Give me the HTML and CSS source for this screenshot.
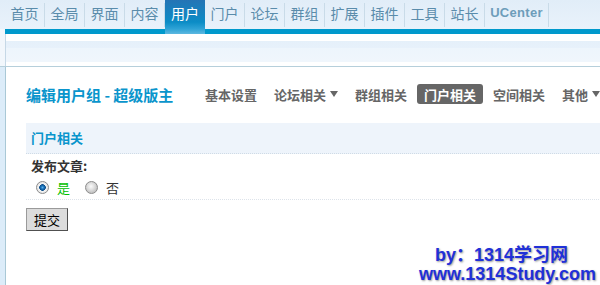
FILE: index.html
```html
<!DOCTYPE html>
<html lang="zh-CN">
<head>
<meta charset="utf-8">
<title>编辑用户组</title>
<link rel="stylesheet" href="styles.css">
</head>
<body>
<div class="topnav">
  <a class="tab">首页</a><span class="sep"></span>
  <a class="tab">全局</a><span class="sep"></span>
  <a class="tab">界面</a><span class="sep"></span>
  <a class="tab">内容</a><span class="sep"></span>
  <a class="tab active">用户</a>
  <a class="tab">门户</a><span class="sep"></span>
  <a class="tab">论坛</a><span class="sep"></span>
  <a class="tab">群组</a><span class="sep"></span>
  <a class="tab">扩展</a><span class="sep"></span>
  <a class="tab">插件</a><span class="sep"></span>
  <a class="tab">工具</a><span class="sep"></span>
  <a class="tab">站长</a><span class="sep"></span>
  <a class="tab uc">UCenter</a><span class="sep"></span>
</div>
<div class="frame-top">
  <div class="rail-top"></div>
  <div class="col-top">
    <div class="bar"></div>
    <div class="subhead"><div class="band"></div></div>
  </div>
</div>
<div class="frame-main">
  <div class="rail-main"></div>
  <div class="content">
    <div class="titlerow">
      <h3 class="title">编辑用户组 - 超级版主</h3>
      <ul class="subnav">
        <li class="item">基本设置</li>
        <li class="item">论坛相关<span class="caret"></span></li>
        <li class="item">群组相关</li>
        <li class="item current">门户相关</li>
        <li class="item">空间相关</li>
        <li class="item">其他<span class="caret"></span></li>
      </ul>
    </div>
    <div class="sec-head">门户相关</div>
    <div class="field-label">发布文章:</div>
    <div class="radios">
      <label class="opt"><input class="radio" type="radio" name="post" checked><span class="yes">是</span></label>
      <label class="opt"><input class="radio" type="radio" name="post"><span class="no">否</span></label>
    </div>
    <button class="submit" type="button">提交</button>
  </div>
</div>
<div class="wm wm1">by：1314学习网</div>
<div class="wm wm2">www.1314Study.com</div>
</body>
</html>
```
FILE: styles.css
```css
* { box-sizing: border-box; }
html, body { margin: 0; padding: 0; }
body {
  width: 600px;
  height: 285px;
  overflow: hidden;
  position: relative;
  background: #fff;
  font-family: "Noto Sans CJK SC", "Noto Sans", sans-serif;
}

.topnav {
  display: flex;
  height: 29px;
  padding-left: 5px;
  background: linear-gradient(#e1edf8, #e9f2fb);
  white-space: nowrap;
}
.tab {
  width: 39px;
  height: 29px;
  flex: none;
  text-align: center;
  font-size: 14px;
  line-height: 26px;
  color: #5a8cab;
}
.tab.active {
  width: 40px;
  height: 34px;
  position: relative;
  z-index: 1;
  color: #fff;
  background: linear-gradient(#2474b5 0, #0b8cc6 65%, #2ea3d6 85%, #5db8e0 100%);
}
.tab.uc {
  width: 63px;
  font-family: "Liberation Sans", Arial, sans-serif;
  font-weight: bold;
  font-size: 13px;
  letter-spacing: 0.3px;
  color: #6d9dba;
}
.sep {
  flex: none;
  width: 1px;
  height: 24px;
  margin-top: 3px;
  background: #c9dbe8;
}

.frame-top {
  display: flex;
  height: 38px;
  border-bottom: 1px solid #b6cfdb;
}
.rail-top {
  width: 5px;
  flex: none;
  background: #f2f7fc;
}
.col-top { flex: 1; }
.bar {
  height: 5px;
  background: #0099cc;
}
.subhead {
  height: 32px;
  border-left: 1px solid #c6d8e6;
  padding-top: 7px;
  background: #fff;
}
.band {
  height: 21px;
  background: linear-gradient(#e5f0fa 0, #e7f1fb 33%, #edf5fc 34%, #f0f6fc 100%);
}

.frame-main {
  display: flex;
  height: 218px;
}
.rail-main {
  width: 5px;
  flex: none;
  background: #dcecf9;
}
.content {
  flex: 1;
  border-left: 1px solid #a9c8d6;
  padding: 17px 0 0 20px;
  background: #fff;
}

.titlerow {
  display: flex;
  align-items: center;
  height: 20px;
  white-space: nowrap;
}
.title {
  margin: 0;
  width: 172px;
  flex: none;
  font-size: 15px;
  font-weight: bold;
  color: #0a95cc;
  line-height: 20px;
  padding-top: 2px;
}
.subnav {
  display: flex;
  gap: 3px;
  margin: 0;
  padding: 0;
  list-style: none;
}
.item {
  flex: none;
  display: flex;
  align-items: center;
  height: 20px;
  padding: 0 7px;
  font-size: 13px;
  font-weight: bold;
  color: #666;
  border-radius: 3px;
}
.item.current {
  background: #666;
  color: #fff;
}
.caret {
  width: 0;
  height: 0;
  margin-left: 4px;
  border-left: 4px solid transparent;
  border-right: 4px solid transparent;
  border-top: 6px solid #666;
}

.sec-head {
  margin-top: 19px;
  height: 31px;
  padding-left: 5px;
  background: #eef4fb;
  border-bottom: 1px dotted #cfdbe6;
  font-size: 13px;
  font-weight: bold;
  line-height: 30px;
  color: #0a95cc;
}
.field-label {
  height: 24px;
  padding-left: 5px;
  font-size: 13px;
  font-weight: bold;
  line-height: 24px;
  color: #333;
}
.radios {
  display: flex;
  align-items: center;
  height: 22px;
  padding-left: 10px;
  padding-bottom: 2px;
  border-bottom: 1px dotted #dde3ea;
}
.opt {
  display: flex;
  align-items: center;
  gap: 8px;
  margin-right: 15px;
  font-size: 13px;
}
.yes { color: #00c000; }
.no { color: #333; }
.radio {
  appearance: none;
  -webkit-appearance: none;
  margin: 0;
  width: 13px;
  height: 13px;
  border-radius: 50%;
  border: 1px solid #8c8c8c;
  background: radial-gradient(circle at 45% 40%, #fafafa 0, #e2e2e2 3px, #c6c6c6 6px);
}
.radio:checked {
  background: radial-gradient(circle at 50% 50%, #62b4ea 0, #1e76bd 1.5px, #0c4d8a 3px, #f4f4f4 3.6px, #e4e4e4 6px);
}

.submit {
  margin-top: 8px;
  width: 42px;
  height: 23px;
  padding: 0;
  background: #dcdcdc;
  border: 1px solid;
  border-color: #9a9a9a #505050 #505050 #9a9a9a;
  font-family: "Noto Sans CJK SC", sans-serif;
  font-size: 13px;
  color: #000;
}

.wm {
  position: absolute;
  font-family: "Liberation Sans", "Noto Sans CJK SC", sans-serif;
  font-weight: bold;
  font-size: 18px;
  line-height: 20px;
  color: #1f30d8;
  text-shadow: 1px 1px 2px #9a9a9a;
  white-space: nowrap;
}
.wm1 { left: 435px; top: 245px; }
.wm2 { left: 419px; top: 264px; }
```
